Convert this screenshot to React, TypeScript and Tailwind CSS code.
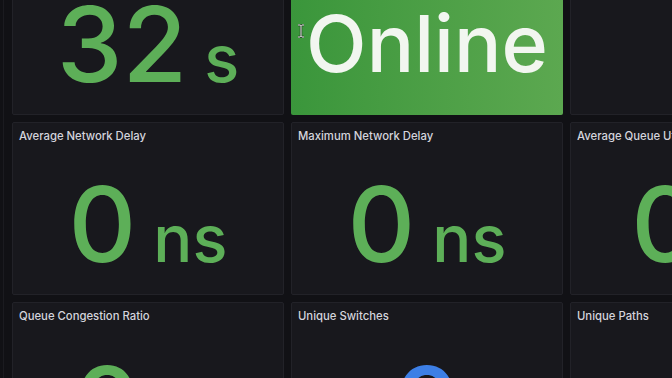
import type { ReactNode } from "react"

type Stat = {
  title?: string
  value: string
  unit?: string
  color?: string
  online?: boolean
}

// grid of stat panels, scrolled so the first row is cut off at the top
const rows: Stat[][] = [
  [
    { value: "32", unit: "s" },
    { value: "Online", online: true },
    { value: "" },
  ],
  [
    { title: "Average Network Delay", value: "0", unit: "ns" },
    { title: "Maximum Network Delay", value: "0", unit: "ns" },
    { title: "Average Queue Utilization", value: "0", unit: "%" },
  ],
  [
    { title: "Queue Congestion Ratio", value: "0", unit: "%" },
    { title: "Unique Switches", value: "0", color: "blue" },
    { title: "Unique Paths", value: "0", color: "blue" },
  ],
]

function IBeam() {
  return (
    <svg width="8" height="14" viewBox="0 0 8 14" className="absolute left-[297px] top-[24px]">
      <path
        d="M1 1h2.2L4 1.8 4.8 1H7M1 13h2.2L4 12.2l.8.8H7M4 1.8v10.4"
        fill="none"
        stroke="#1c3a1c"
        strokeWidth="2.4"
      />
      <path
        d="M1 1h2.2L4 1.8 4.8 1H7M1 13h2.2L4 12.2l.8.8H7M4 1.8v10.4"
        fill="none"
        stroke="#f4f4f4"
        strokeWidth="1"
      />
    </svg>
  )
}

function Panel({ stat }: { stat: Stat }) {
  if (stat.online) {
    return (
      <div className="flex h-[173px] flex-col rounded-[2px] bg-gradient-to-r from-[#3a963b] to-[#5ca850]">
        <div className="h-[30px]" />
        <div className="flex flex-1 items-center justify-center">
          <span className="text-[79px] leading-none font-medium text-[#f2f6f0]">{stat.value}</span>
        </div>
      </div>
    )
  }

  const valueColor = stat.color === "blue" ? "text-[#3d7fe6]" : "text-[#5daf58]"

  let content: ReactNode = null
  if (stat.value) {
    content = (
      <div className={`flex items-baseline ${valueColor}`}>
        <span className="text-[105px] leading-none font-medium">{stat.value}</span>
        {stat.unit && <span className="ml-[17px] text-[65px] leading-none font-medium">{stat.unit}</span>}
      </div>
    )
  }

  return (
    <div className="flex h-[173px] flex-col rounded-[2px] border border-[#222228] bg-[#18181d]">
      <div className="h-[29px] truncate px-[6px] pt-[4px] text-[11.3px] leading-[18px] font-medium whitespace-nowrap text-[#d4d4dc]">
        {stat.title}
      </div>
      <div className="flex flex-1 items-center justify-center">{content}</div>
    </div>
  )
}

export default function App() {
  return (
    <div
      className="relative h-[378px] w-[672px] overflow-hidden bg-[#111115]"
      style={{ fontFamily: "Inter, 'Noto Sans', sans-serif" }}
    >
      <div className="absolute top-0 bottom-0 left-[3px] w-px bg-[#1b1b20]" />
      <div className="-mt-[58px] flex flex-col gap-[7px] pl-[12px]">
        {rows.map((row, i) => (
          <div key={i} className="grid w-[823px] grid-cols-[272px_272px_272px] gap-[7px]">
            {row.map((stat, j) => (
              <Panel key={j} stat={stat} />
            ))}
          </div>
        ))}
      </div>
      <IBeam />
    </div>
  )
}
